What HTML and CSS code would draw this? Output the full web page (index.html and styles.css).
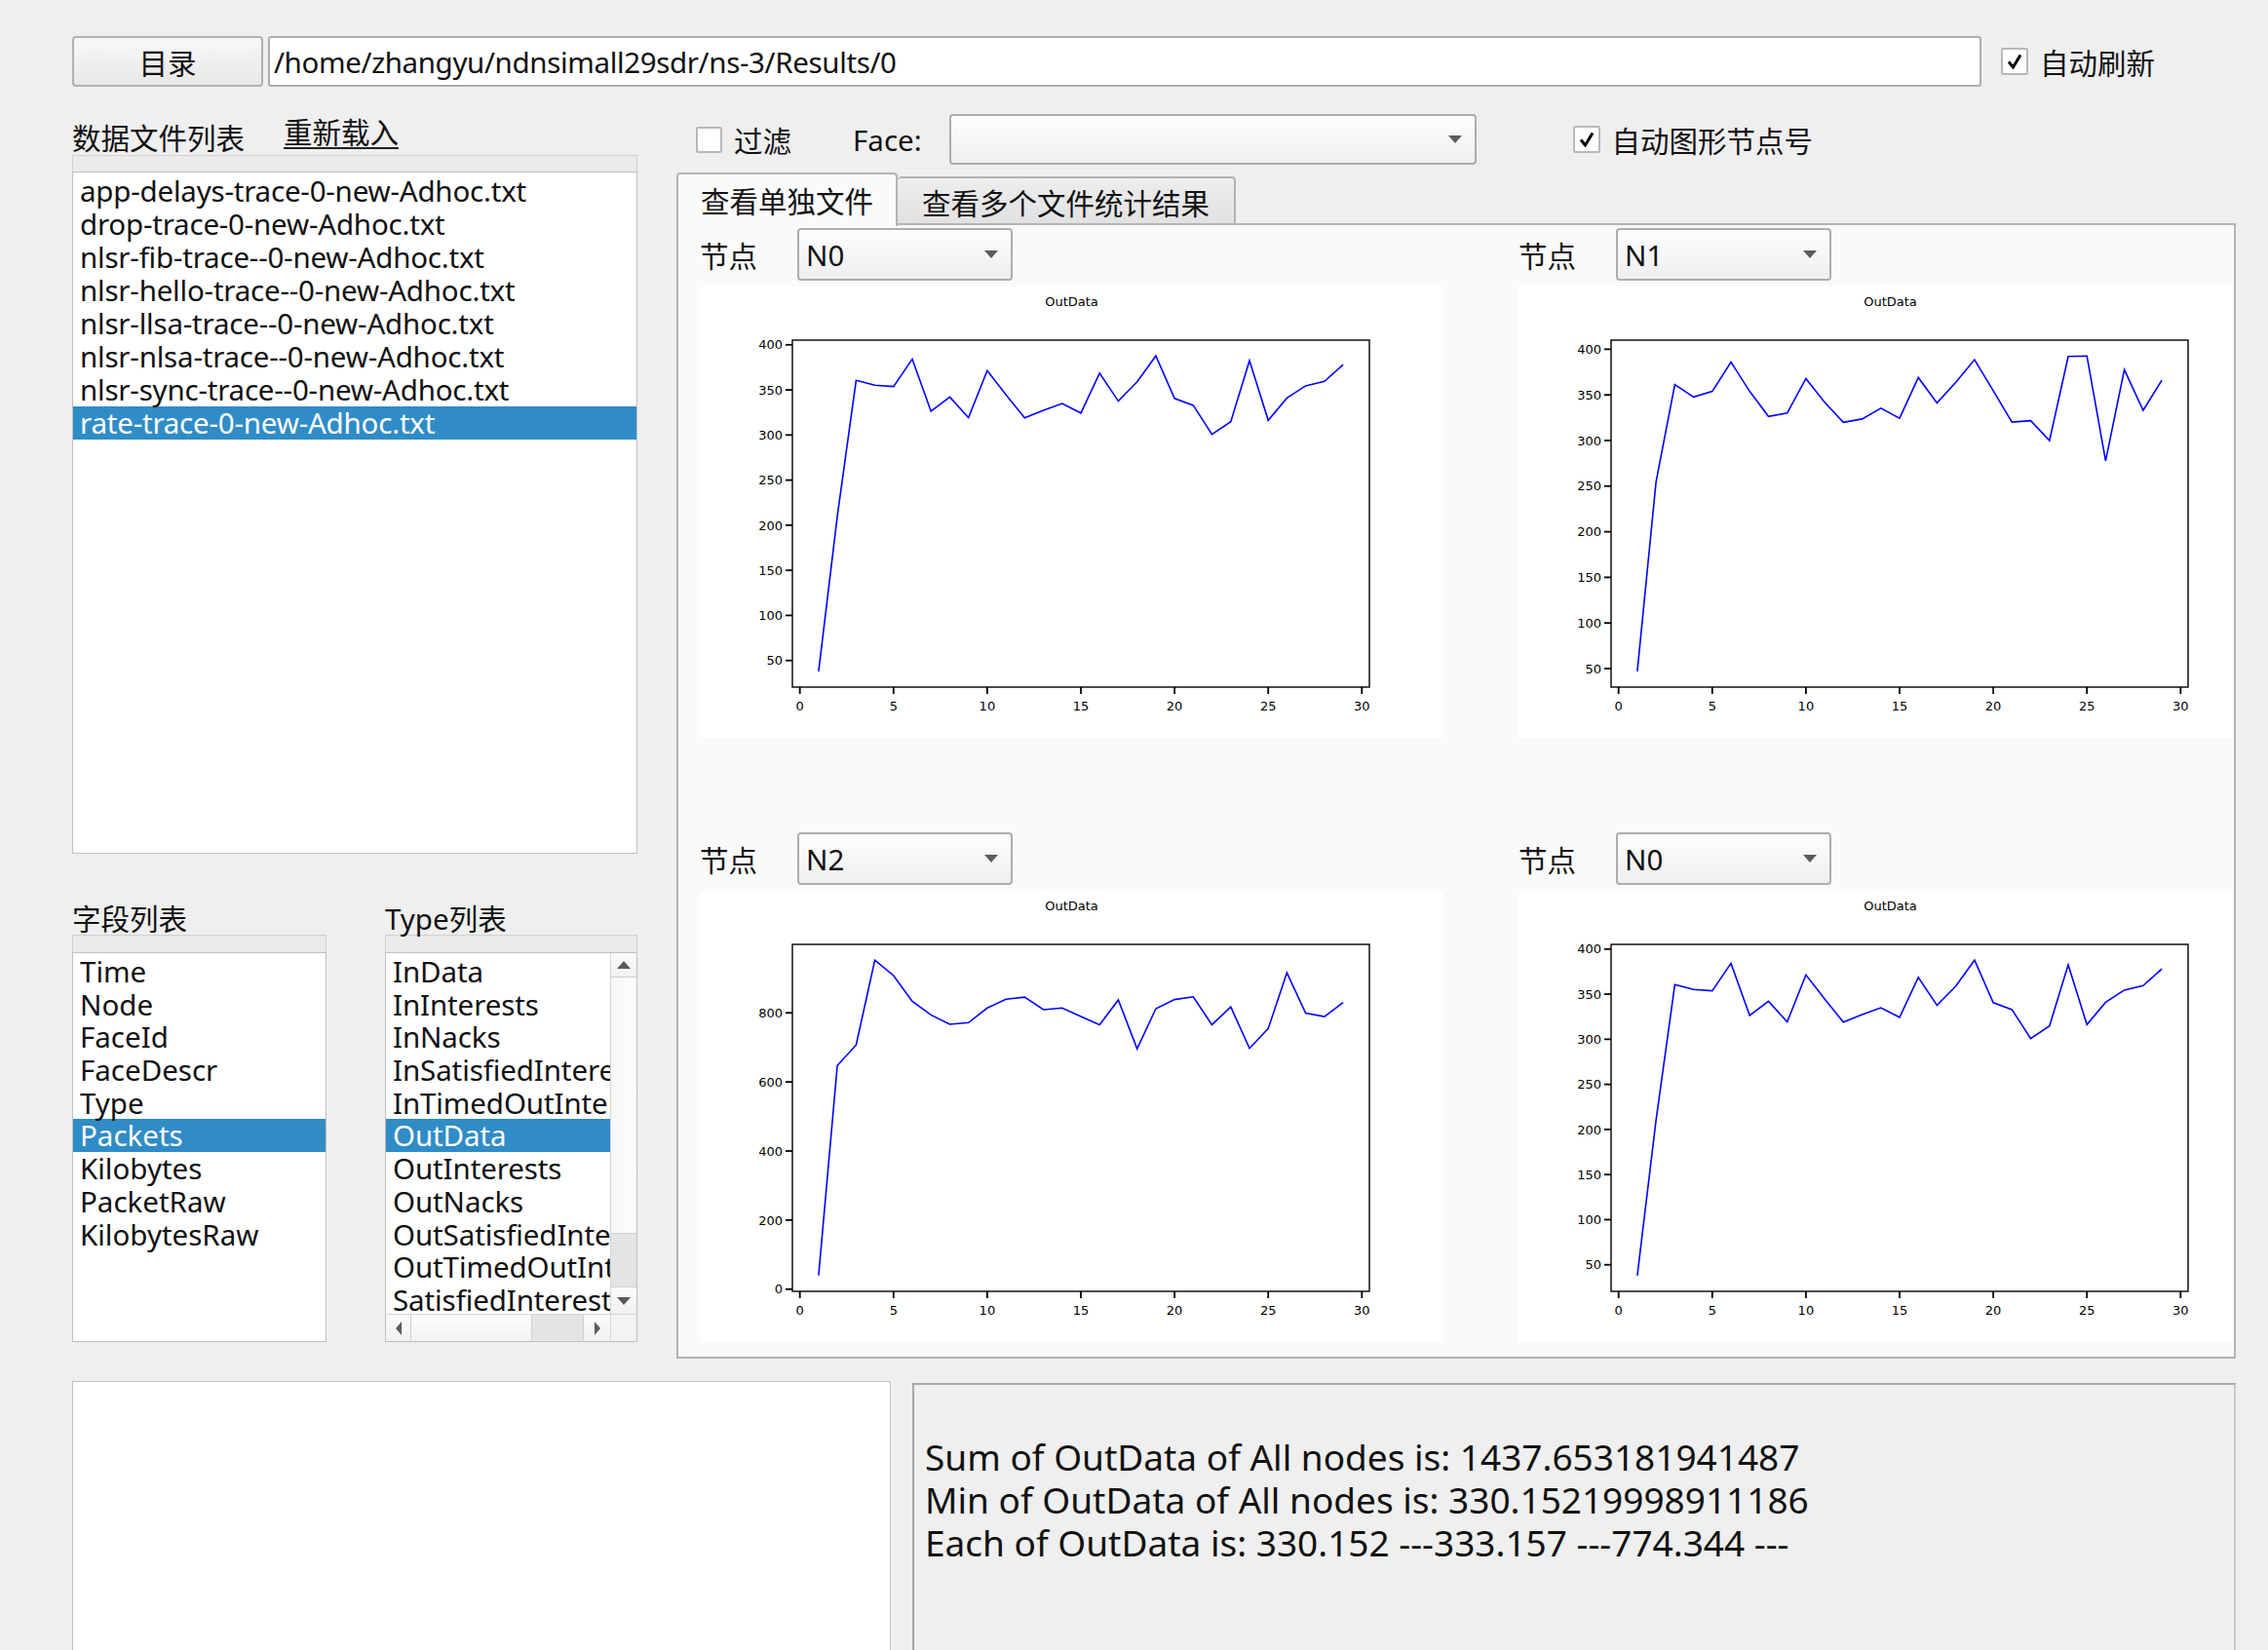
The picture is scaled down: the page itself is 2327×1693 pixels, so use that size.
FILE: index.html
```html
<!DOCTYPE html>
<html lang="zh">
<head>
<meta charset="utf-8">
<title>Trace Viewer</title>
<link rel="stylesheet" href="styles.css">
</head>
<body>
<div class="app">
  <div class="toolbar">
    <div class="btn-dir">目录</div>
    <div class="path">/home/zhangyu/ndnsimall29sdr/ns-3/Results/0</div>
    <div class="check top-check">
      <span class="cbox"><svg viewBox="0 0 20 20"><path d="M4 10.5 L8.5 16 L16 3.5" fill="none" stroke="#000" stroke-width="3"/></svg></span>
      <span>自动刷新</span>
    </div>
  </div>

  <div class="middle">
    <div class="left-col">
      <div class="files-head">
        <span class="lbl">数据文件列表</span>
        <span class="reload">重新载入</span>
      </div>
      <div class="strip"></div>
      <ul class="list files">
        <li>app-delays-trace-0-new-Adhoc.txt</li>
        <li>drop-trace-0-new-Adhoc.txt</li>
        <li>nlsr-fib-trace--0-new-Adhoc.txt</li>
        <li>nlsr-hello-trace--0-new-Adhoc.txt</li>
        <li>nlsr-llsa-trace--0-new-Adhoc.txt</li>
        <li>nlsr-nlsa-trace--0-new-Adhoc.txt</li>
        <li>nlsr-sync-trace--0-new-Adhoc.txt</li>
        <li class="sel">rate-trace-0-new-Adhoc.txt</li>
      </ul>

      <div class="sublists">
        <div class="sub field-sub">
          <div class="sub-lbl">字段列表</div>
          <div class="strip"></div>
          <ul class="list fields">
            <li>Time</li>
            <li>Node</li>
            <li>FaceId</li>
            <li>FaceDescr</li>
            <li>Type</li>
            <li class="sel">Packets</li>
            <li>Kilobytes</li>
            <li>PacketRaw</li>
            <li>KilobytesRaw</li>
          </ul>
        </div>
        <div class="sub type-sub">
          <div class="sub-lbl">Type列表</div>
          <div class="strip"></div>
          <div class="list types">
            <ul class="type-items">
              <li>InData</li>
              <li>InInterests</li>
              <li>InNacks</li>
              <li>InSatisfiedInterests</li>
              <li>InTimedOutInterests</li>
              <li class="sel">OutData</li>
              <li>OutInterests</li>
              <li>OutNacks</li>
              <li>OutSatisfiedInterests</li>
              <li>OutTimedOutInterests</li>
              <li>SatisfiedInterests</li>
            </ul>
            <div class="vscroll">
              <div class="sb-btn up"><span class="tri tri-up"></span></div>
              <div class="sb-handle v"></div>
              <div class="sb-groove v"></div>
              <div class="sb-btn down"><span class="tri tri-down"></span></div>
            </div>
            <div class="hscroll">
              <div class="sb-btn left"><span class="tri tri-left"></span></div>
              <div class="sb-handle h"></div>
              <div class="sb-groove h"></div>
              <div class="sb-btn right"><span class="tri tri-right"></span></div>
            </div>
            <div class="corner"></div>
          </div>
        </div>
      </div>
    </div>

    <div class="right-col">
      <div class="filter-row">
        <div class="check filter-check">
          <span class="cbox"></span>
          <span>过滤</span>
        </div>
        <span class="face-lbl">Face:</span>
        <div class="combo face-combo"><span></span><span class="arrow"></span></div>
        <div class="check auto-check">
          <span class="cbox"><svg viewBox="0 0 20 20"><path d="M4 10.5 L8.5 16 L16 3.5" fill="none" stroke="#000" stroke-width="3"/></svg></span>
          <span>自动图形节点号</span>
        </div>
      </div>

      <div class="tabs">
        <div class="tab active">查看单独文件</div>
        <div class="tab">查看多个文件统计结果</div>
      </div>
      <div class="pane">
        <div class="cell">
          <div class="node-row"><span class="node-lbl">节点</span><div class="combo node-combo"><span>N0</span><span class="arrow"></span></div></div>
          <div class="chart" data-series="n0"></div>
        </div>
        <div class="cell">
          <div class="node-row"><span class="node-lbl">节点</span><div class="combo node-combo"><span>N1</span><span class="arrow"></span></div></div>
          <div class="chart" data-series="n1"></div>
        </div>
        <div class="cell">
          <div class="node-row"><span class="node-lbl">节点</span><div class="combo node-combo"><span>N2</span><span class="arrow"></span></div></div>
          <div class="chart" data-series="n2"></div>
        </div>
        <div class="cell">
          <div class="node-row"><span class="node-lbl">节点</span><div class="combo node-combo"><span>N0</span><span class="arrow"></span></div></div>
          <div class="chart" data-series="n0"></div>
        </div>
      </div>
    </div>
  </div>

  <div class="bottom">
    <div class="log-box"></div>
    <div class="stats">
      <div>Sum of OutData of All nodes is: 1437.653181941487</div>
      <div>Min of OutData of All nodes is: 330.15219998911186</div>
      <div>Each of OutData is: 330.152 ---333.157 ---774.344 ---</div>
    </div>
  </div>
</div>
<script src="charts.js"></script>
</body>
</html>
```

FILE: styles.css
```css
* { box-sizing: border-box; }
html, body { margin: 0; padding: 0; }
body {
  width: 2327px;
  height: 1693px;
  overflow: hidden;
  background: #efefef;
  font-family: "Noto Sans", "Noto Sans CJK SC", sans-serif;
  font-size: 29.5px;
  color: #111;
}
.app { padding: 37px 33px 0 74px; }

/* toolbar */
.toolbar { display: flex; align-items: center; height: 52px; }
.btn-dir {
  width: 196px; height: 52px;
  border: 2px solid #b0b0b0; border-radius: 4px;
  background: linear-gradient(#f8f8f8, #e7e7e7);
  display: flex; align-items: center; justify-content: center;
}
.path {
  margin-left: 5px; width: 1758px; height: 52px;
  border: 2px solid #adadad; border-radius: 3px;
  background: #fff; padding-left: 4px;
  display: flex; align-items: center; white-space: nowrap;
  letter-spacing: -0.35px;
}
.check { display: flex; align-items: center; gap: 12px; }
.top-check { margin-left: 20px; }
.cbox {
  width: 28px; height: 28px;
  border: 2px solid #b8b8b8; border-radius: 2px; background: #fff;
  display: flex; align-items: center; justify-content: center;
}
.cbox svg { width: 20px; height: 20px; }

/* middle */
.middle { display: grid; grid-template-columns: 580px 1600px; column-gap: 40px; }
.left-col { display: flex; flex-direction: column; }
.files-head { height: 70px; display: flex; align-items: flex-end; }
.lbl { line-height: 34px; }
.reload { margin-left: 40px; line-height: 30px; border-bottom: 2px solid #222; margin-bottom: 6px; }
.strip { height: 17px; border: 1px solid #d0d0d0; border-bottom: none; background: #ebebeb; }
.list {
  margin: 0; padding: 4px 0 0 0; list-style: none;
  background: #fff; border: 1px solid #c0c0c0;
}
.list li { line-height: 33.7px; height: 33.7px; padding-left: 7px; white-space: nowrap; }
.list li.sel { background: #308cc6; color: #fff; }
.files { height: 700px; letter-spacing: -0.2px; padding-top: 2px; }
.files li { height: 34px; line-height: 34px; }

.sublists { display: flex; gap: 60px; margin-top: 50px; }
.field-sub { width: 261px; }
.type-sub { width: 259px; }
.sub-lbl { line-height: 33px; }
.sub .strip { height: 18px; }
.fields { height: 400px; padding-top: 2px; }

.types {
  height: 400px; padding: 0;
  display: grid; grid-template-columns: 230px 27px; grid-template-rows: 370px 28px;
}
.type-items { margin: 0; padding: 2px 0 0 0; list-style: none; overflow: hidden; letter-spacing: -0.1px; }
.vscroll { display: flex; flex-direction: column; border-left: 1px solid #d6d6d6; }
.hscroll { display: flex; border-top: 1px solid #d6d6d6; }
.sb-btn {
  display: flex; align-items: center; justify-content: center;
  background: linear-gradient(#fbfbfb, #f1f1f1);
}
.vscroll .up { height: 25px; border-bottom: 1px solid #cfcfcf; }
.vscroll .down { height: 28px; border-top: 1px solid #cfcfcf; }
.sb-handle.v { height: 262px; background: linear-gradient(90deg, #f7f7f7, #fdfdfd); }
.sb-groove.v { height: 55px; background: #e4e4e4; border-top: 1px solid #d0d0d0; }
.hscroll .left { width: 26px; border-right: 1px solid #cfcfcf; }
.hscroll .right { width: 28px; border-left: 1px solid #cfcfcf; }
.sb-handle.h { width: 123px; background: linear-gradient(#fdfdfd, #f3f3f3); }
.sb-groove.h { width: 53px; background: #e4e4e4; border-left: 1px solid #d0d0d0; }
.corner { background: #f3f3f3; border-left: 1px solid #d6d6d6; border-top: 1px solid #d6d6d6; }
.tri { width: 0; height: 0; display: block; }
.tri-up { border-left: 7px solid transparent; border-right: 7px solid transparent; border-bottom: 8px solid #5a5a5a; }
.tri-down { border-left: 7px solid transparent; border-right: 7px solid transparent; border-top: 8px solid #5a5a5a; }
.tri-left { border-top: 7px solid transparent; border-bottom: 7px solid transparent; border-right: 6px solid #5a5a5a; }
.tri-right { border-top: 7px solid transparent; border-bottom: 7px solid transparent; border-left: 6px solid #5a5a5a; }

/* right column */
.right-col { display: flex; flex-direction: column; }
.filter-row { display: flex; align-items: center; height: 52px; margin-top: 28px; }
.filter-check { margin-left: 20px; }
.filter-check .cbox { width: 27px; height: 27px; }
.face-lbl { margin-left: 63px; }
.combo {
  display: flex; align-items: center; justify-content: space-between;
  border: 2px solid #adadad; border-radius: 4px;
  background: linear-gradient(#fdfdfd, #efefef);
  padding: 0 13px 0 7px;
}
.arrow {
  width: 0; height: 0;
  border-left: 7px solid transparent; border-right: 7px solid transparent;
  border-top: 8px solid #5b5b5b;
}
.face-combo { margin-left: 28px; width: 541px; height: 52px; }
.auto-check { margin-left: 99px; }

.tabs { display: flex; align-items: flex-end; height: 53px; margin-top: 8px; }
.tab {
  border: 2px solid #b3b3b3; border-bottom: none;
  border-radius: 4px 4px 0 0;
  white-space: nowrap;
}
.tab.active {
  position: relative; z-index: 1;
  height: 55px; margin-bottom: -2px;
  padding: 8px 23px 0;
  background: #fafafa; line-height: 40px;
}
.tab:not(.active) {
  height: 49px; padding: 6px 25px 0;
  border-left: none;
  background: linear-gradient(#ededed, #e1e1e1); line-height: 40px;
}
.pane {
  margin-top: -1px;
  height: 1165px;
  border: 2px solid #b3b3b3;
  background: #fafafa;
  padding: 3px 0 0 22px;
  overflow: hidden;
  display: grid;
  grid-template-columns: 840px 840px;
  grid-template-rows: 620px 540px;
}
.cell { display: flex; flex-direction: column; min-width: 0; }
.node-row { display: flex; align-items: center; height: 54px; }
.node-lbl { width: 100px; }
.node-combo { width: 221px; height: 54px; }
.chart { margin-top: 6px; width: 763px; height: 463px; background: #fff; }
.chart svg { display: block; }
.chart .ttl, .chart .tick { font-family: "DejaVu Sans", sans-serif; font-size: 13px; fill: #000; }

/* bottom */
.bottom { display: flex; align-items: flex-start; margin-top: 23px; }
.log-box { width: 840px; height: 300px; background: #fff; border: 1px solid #c4c4c4; }
.stats {
  margin-left: 22px; margin-top: 2px; width: 1358px; height: 300px;
  border: 2px solid #a9a9a9; border-right-color: #c8c8c8; border-bottom: none;
  background: #efefef;
  padding: 52px 0 0 11px;
  font-size: 37px; line-height: 44px; white-space: nowrap;
}
```

FILE: charts.js
```js
(function () {
  var SERIES = {
    n0: [38, 210, 360.6, 355.2, 353.7, 384.2, 326.3, 342.1, 319.3, 371.4, 344.8, 319, 327.5, 334.8, 324.4, 368.7, 337.5, 359.1, 387.7, 340.6, 332.9, 300.8, 314.7, 382.6, 316.3, 341, 354.5, 359.5, 378],
    n1: [47, 254.4, 361.4, 347.7, 353.8, 385.9, 353.8, 326.3, 330.1, 367.9, 341.9, 319.8, 323.6, 335.4, 324.3, 369, 341.2, 363.7, 388.5, 354.5, 320.1, 321.7, 299.9, 392, 392.7, 277.7, 377.5, 333.1, 366],
    n2: [39.4, 647.5, 707, 952.5, 908, 833, 794, 766.7, 771.7, 814, 839.4, 845.5, 809, 814, 789, 765.7, 837.4, 696, 812, 838.4, 846.5, 765.7, 817, 697, 754.5, 916, 799, 789, 830]
  };
  var YTICKS = {
    n0: [50, 100, 150, 200, 250, 300, 350, 400],
    n1: [50, 100, 150, 200, 250, 300, 350, 400],
    n2: [0, 200, 400, 600, 800]
  };
  var NS = 'http://www.w3.org/2000/svg';
  function el(tag, attrs, parent) {
    var e = document.createElementNS(NS, tag);
    for (var k in attrs) e.setAttribute(k, attrs[k]);
    if (parent) parent.appendChild(e);
    return e;
  }
  var charts = document.querySelectorAll('.chart');
  for (var c = 0; c < charts.length; c++) {
    var div = charts[c];
    var key = div.getAttribute('data-series');
    var d = SERIES[key];
    var W = 763, H = 463, L = 95, R = 687, T = 55, B = 411;
    var mn = Math.min.apply(null, d), mx = Math.max.apply(null, d);
    var pad = (mx - mn) * 0.05;
    var y0 = mn - pad, y1 = mx + pad, x0 = -0.4, x1 = 30.4;
    var sx = function (v) { return L + (v - x0) / (x1 - x0) * (R - L); };
    var sy = function (v) { return B - (v - y0) / (y1 - y0) * (B - T); };
    var svg = el('svg', { width: W, height: H, viewBox: '0 0 ' + W + ' ' + H }, div);
    var t = el('text', { x: W / 2, y: 20, 'text-anchor': 'middle', 'class': 'ttl' }, svg);
    t.textContent = 'OutData';
    var pts = d.map(function (v, i) { return sx(i + 1).toFixed(1) + ',' + sy(v).toFixed(1); }).join(' ');
    el('polyline', { points: pts, fill: 'none', stroke: '#0000ff', 'stroke-width': 1.6, 'stroke-linejoin': 'miter' }, svg);
    el('rect', { x: L, y: T, width: R - L, height: B - T, fill: 'none', stroke: '#000', 'stroke-width': 1.4 }, svg);
    for (var v = 0; v <= 30; v += 5) {
      var x = sx(v);
      el('line', { x1: x, y1: B, x2: x, y2: B + 7, stroke: '#000', 'stroke-width': 1.8 }, svg);
      var tx = el('text', { x: x, y: B + 24, 'text-anchor': 'middle', 'class': 'tick' }, svg);
      tx.textContent = String(v);
    }
    YTICKS[key].forEach(function (v) {
      var y = sy(v);
      el('line', { x1: L - 7, y1: y, x2: L, y2: y, stroke: '#000', 'stroke-width': 1.8 }, svg);
      var ty = el('text', { x: L - 10, y: y + 4.7, 'text-anchor': 'end', 'class': 'tick' }, svg);
      ty.textContent = String(v);
    });
  }
})();
```
